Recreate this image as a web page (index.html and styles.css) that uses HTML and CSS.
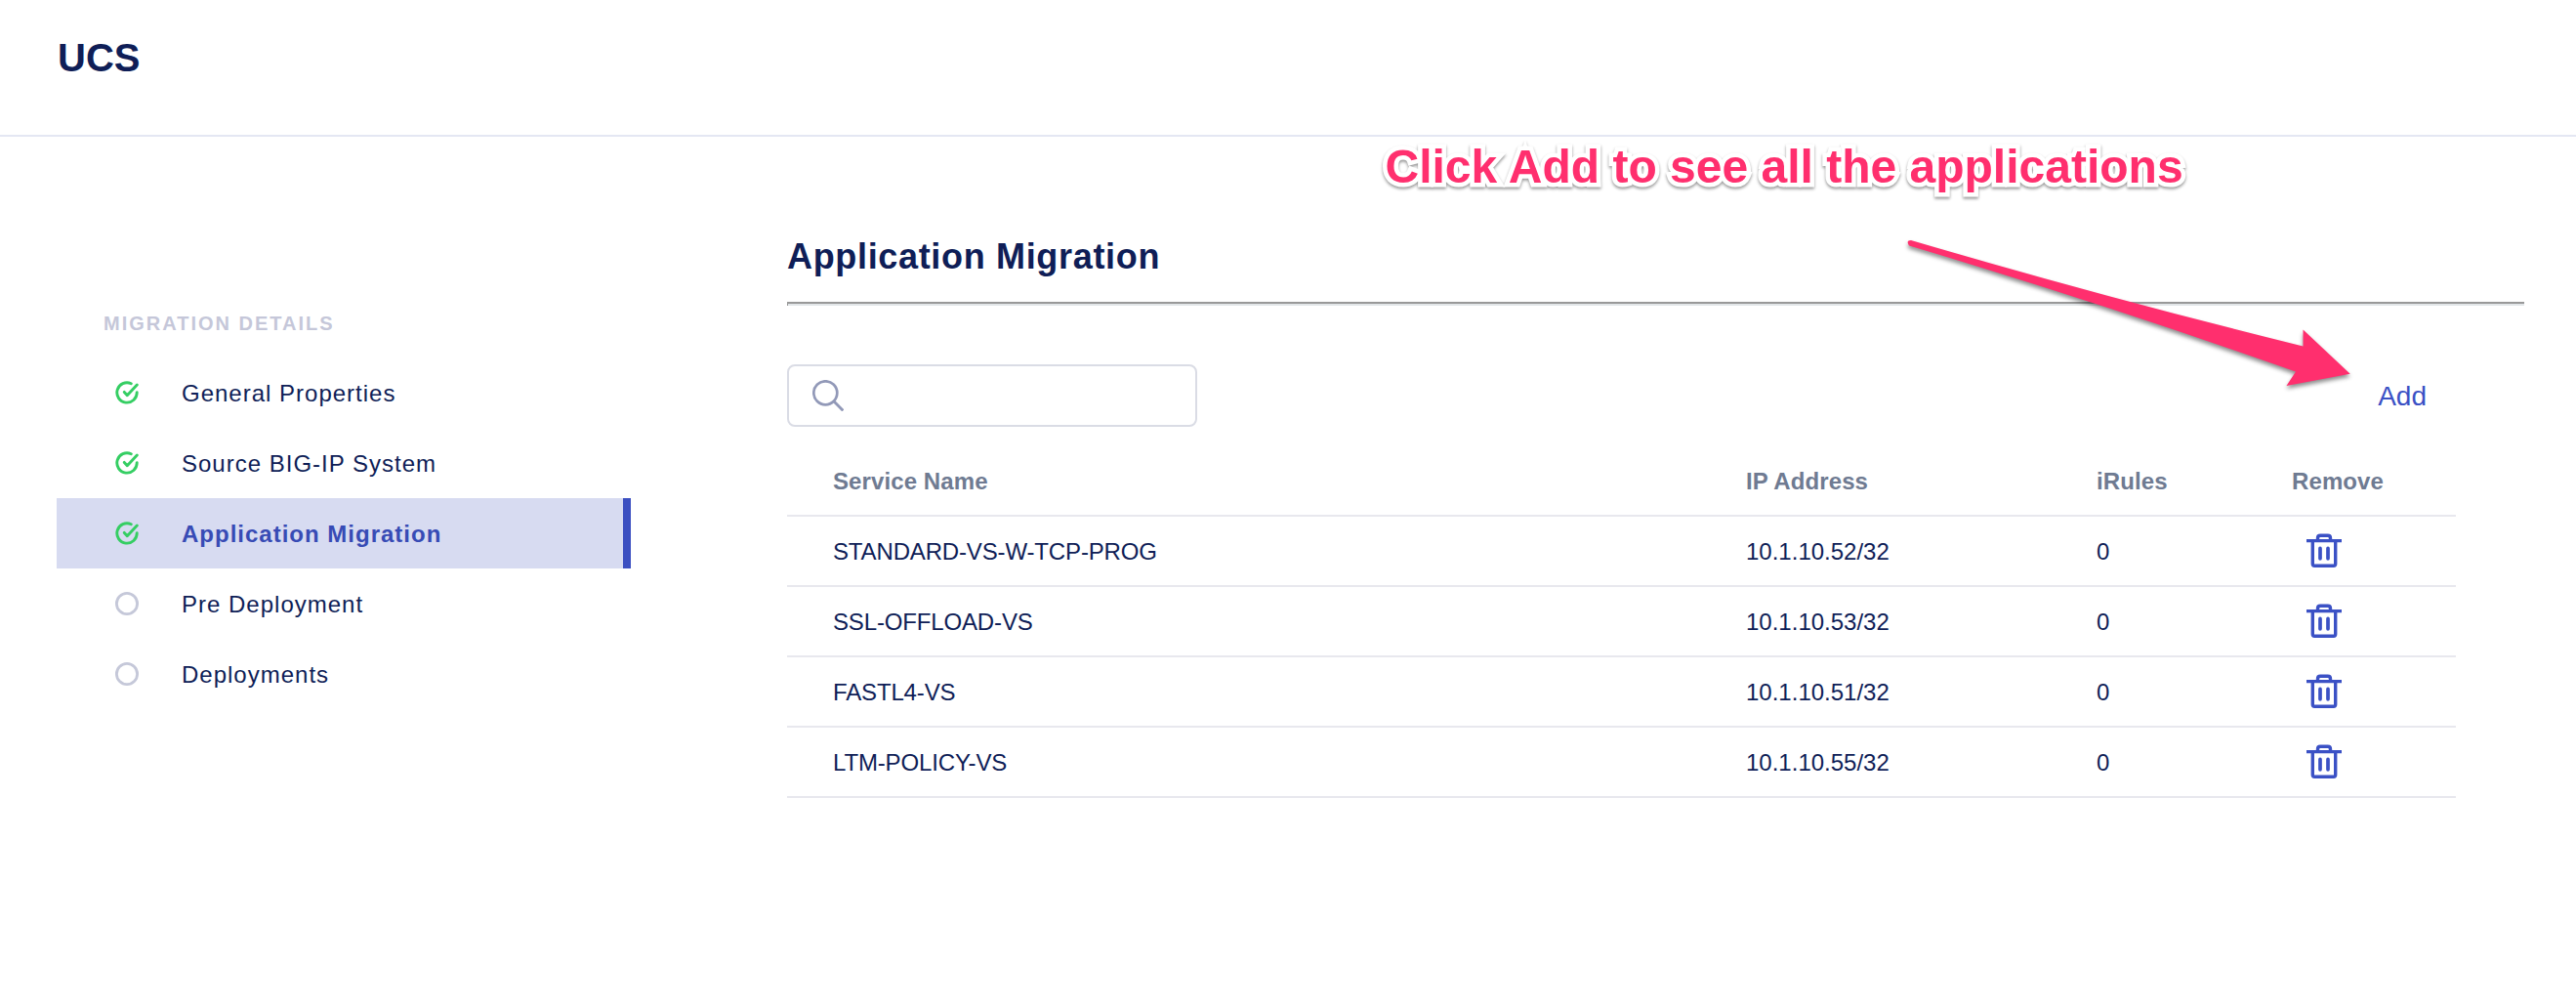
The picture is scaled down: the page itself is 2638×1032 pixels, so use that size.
FILE: index.html
```html
<!DOCTYPE html>
<html lang="en">
<head>
<meta charset="utf-8">
<title>UCS - Application Migration</title>
<link rel="stylesheet" href="styles.css">
</head>
<body>
<svg class="sprite" aria-hidden="true">
  <symbol id="done" viewBox="0 0 24 24"><path d="M16.3 2.7A10.2 10.2 0 1 0 22.2 11.6M9.3 11.4l3 3.3L22.3 4" fill="none" stroke="#35ce63" stroke-width="2.9" stroke-linecap="round" stroke-linejoin="round"/></symbol>
  <symbol id="todo" viewBox="0 0 24 24"><circle cx="12" cy="12" r="10.6" fill="none" stroke="#c5c8d9" stroke-width="2.8"/></symbol>
  <symbol id="trash" viewBox="0 0 36 36"><path d="M0 7.6h36M6.3 8v23.200q0 2 2 2h19.400q2 0 2-2V8M11.500 7V5q0-2.700 2.700-2.700h7.600q2.700 0 2.700 2.700v2" fill="none" stroke="#3b51c5" stroke-width="3.400"/><path d="M14 15.400v10.400M22 15.400v10.400" stroke="#3b51c5" stroke-width="3.700" stroke-linecap="round"/></symbol>
</svg>
<header class="top"><h1 class="brand">UCS</h1></header>
<div class="page">
  <nav class="steps">
    <h2 class="steps-title">MIGRATION DETAILS</h2>
    <ul class="step-list">
      <li class="step"><svg class="step-icon"><use href="#done"/></svg><span>General Properties</span></li>
      <li class="step"><svg class="step-icon"><use href="#done"/></svg><span>Source BIG-IP System</span></li>
      <li class="step active"><svg class="step-icon"><use href="#done"/></svg><span>Application Migration</span></li>
      <li class="step"><svg class="step-icon"><use href="#todo"/></svg><span>Pre Deployment</span></li>
      <li class="step"><svg class="step-icon"><use href="#todo"/></svg><span>Deployments</span></li>
    </ul>
  </nav>
  <main class="content">
    <h2 class="title">Application Migration</h2>
    <hr class="rule">
    <div class="toolbar">
      <div class="search">
        <svg class="search-icon" viewBox="0 0 32 32"><circle cx="13.3" cy="13.3" r="12" fill="none" stroke="#9299b8" stroke-width="2.7"/><path d="M21.8 21.8l9.6 9.6" stroke="#9299b8" stroke-width="2.9"/></svg>
      </div>
      <a class="add">Add</a>
    </div>
    <div class="table">
      <div class="row head"><span>Service Name</span><span>IP Address</span><span>iRules</span><span>Remove</span></div>
      <div class="row"><span class="name">STANDARD-VS-W-TCP-PROG</span><span>10.1.10.52/32</span><span>0</span><svg class="trash"><use href="#trash"/></svg></div>
      <div class="row"><span class="name">SSL-OFFLOAD-VS</span><span>10.1.10.53/32</span><span>0</span><svg class="trash"><use href="#trash"/></svg></div>
      <div class="row"><span class="name">FASTL4-VS</span><span>10.1.10.51/32</span><span>0</span><svg class="trash"><use href="#trash"/></svg></div>
      <div class="row"><span class="name">LTM-POLICY-VS</span><span>10.1.10.55/32</span><span>0</span><svg class="trash"><use href="#trash"/></svg></div>
    </div>
  </main>
</div>
<div class="note">Click Add to see all the applications</div>
<svg class="arrow" viewBox="0 0 480 180"><path d="M16 6Q217 65 417.5 114.5V97.5L465.7 142.700L400.500 155L410 140.500Q212 70.500 14 11.500Q10.500 6 16 6Z" fill="#ff2f6e"/></svg>
</body>
</html>
```
FILE: styles.css
```css
* { box-sizing: border-box; }
body {
  margin: 0;
  min-height: 1032px;
  position: relative;
  background: #fff;
  color: #0f1e57;
  font-family: "Liberation Sans", Arial, sans-serif;
  font-size: 24px;
}
h1, h2, ul { margin: 0; padding: 0; list-style: none; }
.sprite { position: absolute; width: 0; height: 0; }
.top { height: 140px; padding: 36px 59px 0; border-bottom: 2px solid #e4e7f3; }
.brand { font-size: 40px; line-height: 46px; }
.page { display: flex; gap: 160px; padding-left: 58px; }
.steps { width: 588px; padding-top: 179px; }
.steps-title { padding-left: 48px; font-size: 20px; line-height: 24px; letter-spacing: 2px; color: #c5c7d9; }
.step-list { padding-top: 23px; }
.step { display: flex; align-items: center; gap: 44px; height: 72px; padding-left: 60px; letter-spacing: 1px; }
.step span, .row span, .add { padding-top: 2px; }
.step-icon { width: 24px; height: 24px; }
.active { background: #d7dbf1; border-right: 8px solid #3b4fc1; color: #374bb5; font-weight: bold; }
.content { width: 1779px; padding-top: 102px; }
.title { font-size: 36px; line-height: 42px; letter-spacing: .67px; }
.rule { margin: 25px 0 0; height: 4px; border: 0 solid #999; border-width: 2px 0 0 1px; background: #e2e6e8; }
.toolbar { display: flex; justify-content: space-between; align-items: center; margin-top: 60px; padding-right: 100px; }
.search { display: flex; align-items: center; width: 420px; height: 64px; padding-left: 24px; border: 2px solid #dadce5; border-radius: 8px; }
.search-icon { width: 32px; height: 32px; }
.add { color: #3b51c5; font-size: 28px; }
.table { width: 1709px; margin-top: 20px; }
.row { display: grid; grid-template-columns: 935px 359px 200px 1fr; align-items: center; height: 72px; padding-left: 47px; border-bottom: 2px solid #e8e8ee; }
.head { color: #6f7b92; font-weight: bold; letter-spacing: .1px; }
.name { letter-spacing: -.15px; }
.trash { width: 36px; height: 36px; margin-left: 15px; }
.note {
  position: absolute;
  left: 1418.5px;
  top: 143px;
  font-size: 48px;
  line-height: 56px;
  font-weight: bold;
  white-space: nowrap;
  color: #ff2f6e;
  -webkit-text-stroke: 9px #fff;
  paint-order: stroke fill;
  filter: drop-shadow(0 2px 1.5px rgba(0, 0, 0, .4));
}
.arrow { position: absolute; left: 1941px; top: 240px; width: 480px; height: 180px; filter: drop-shadow(0 3px 2px rgba(0, 0, 0, .45)); }
```
